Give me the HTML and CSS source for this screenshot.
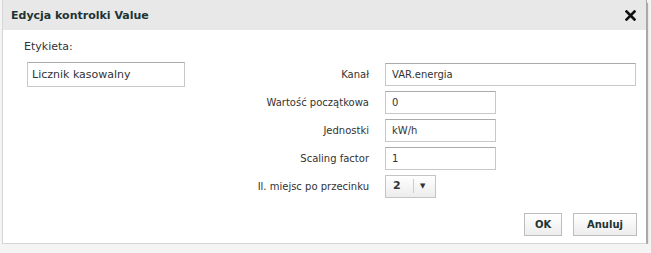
FILE: index.html
```html
<!DOCTYPE html>
<html lang="pl">
<head>
    <meta charset="UTF-8">
    <title>Edycja kontrolki Value</title>
    <link rel="stylesheet" href="styles.css">
</head>
<body>
<div class="dialog">
    <div class="dialog-header">
        <span class="dialog-title">Edycja kontrolki Value</span>
        <svg class="dialog-close" width="11" height="11" viewBox="0 0 11 11">
            <path d="M1.5 1.5 L9.5 9.5 M9.5 1.5 L1.5 9.5" stroke="#111" stroke-width="2.6" stroke-linecap="square"/>
        </svg>
    </div>
    <div class="dialog-body">
        <div class="form">
            <div class="caption">Etykieta:</div>
            <input class="field field-label" type="text" value="Licznik kasowalny">
            <label class="row-label row-1">Kanał</label>
            <input class="field field-wide row-1" type="text" value="VAR.energia">
            <label class="row-label row-2">Wartość początkowa</label>
            <input class="field field-short row-2" type="text" value="0">
            <label class="row-label row-3">Jednostki</label>
            <input class="field field-short row-3" type="text" value="kW/h">
            <label class="row-label row-4">Scaling factor</label>
            <input class="field field-short row-4" type="text" value="1">
            <label class="row-label row-5">Il. miejsc po przecinku</label>
            <div class="select row-5">
                <span class="select-value">2</span>
                <span class="select-arrow">&#x25BC;</span>
            </div>
        </div>
        <div class="buttons">
            <button class="btn btn-ok">OK</button>
            <button class="btn btn-cancel">Anuluj</button>
        </div>
    </div>
</div>
</body>
</html>
```

FILE: styles.css
```css
html, body {
    margin: 0;
    background: #f4f4f4;
    font-family: "DejaVu Sans", Verdana, sans-serif;
    font-size: 10px;
    color: #333;
}

.dialog {
    width: 643px;
    height: 243px;
    margin-left: 2px;
    background: #fff;
    border: 1px solid #d6d6d6;
    border-top: 0;
    border-right-color: #a8a8a8;
    box-shadow: 1px 3px 1px #aaa;
    display: flex;
    flex-direction: column;
}

.dialog-header {
    height: 30px;
    background: #e8e8e8;
    display: flex;
    align-items: center;
    justify-content: space-between;
    padding: 0 10px 0 8px;
}

.dialog-title {
    font-weight: bold;
    font-size: 11px;
    color: #213333;
}

.dialog-body {
    flex: 1;
    padding: 6px 8px 0 19px;
}

.form {
    display: grid;
    grid-template-columns: 163px 200px 251px;
    grid-template-rows: 21px 22px 22px 22px 22px 22px;
    row-gap: 6px;
    align-items: center;
}

.caption {
    grid-column: 1;
    grid-row: 1;
    padding-left: 2px;
    font-size: 11px;
}

.row-label {
    grid-column: 2;
    text-align: right;
    padding-right: 16px;
}

.row-1 { grid-row: 2; }
.row-2 { grid-row: 3; }
.row-3 { grid-row: 4; }
.row-4 { grid-row: 5; }
.row-5 { grid-row: 6; }

.field {
    box-sizing: border-box;
    height: 23px;
    border: 1px solid #c8c8c8;
    border-top-color: #aaa;
    padding: 0 6px;
    font-family: inherit;
    font-size: 10px;
    color: #333;
    grid-column: 3;
}

.field-label {
    grid-column: 1;
    grid-row: 2;
    width: 158px;
    margin-left: 5px;
    height: 25px;
    font-size: 11px;
    padding: 0 4px;
}

.field-wide {
    width: 251px;
}

.field-short {
    width: 111px;
}

.select {
    grid-column: 3;
    box-sizing: border-box;
    width: 51px;
    height: 23px;
    border: 1px solid #c4c4c4;
    background: linear-gradient(#fff, #ececec);
    display: flex;
    align-items: center;
}

.select-value {
    width: 28px;
    padding-left: 7px;
    box-sizing: border-box;
    font-weight: bold;
    font-size: 11px;
    border-right: 1px solid #ccc;
    line-height: 14px;
}

.select-arrow {
    font-size: 7px;
    padding-left: 6px;
    color: #333;
}

.buttons {
    display: flex;
    justify-content: flex-end;
    gap: 11px;
    margin-top: 16px;
    padding-right: 1px;
}

.btn {
    height: 23px;
    border: 1px solid #bdbdbd;
    background: linear-gradient(#fff, #ededed);
    font-family: inherit;
    font-size: 10px;
    font-weight: bold;
    color: #213333;
}

.btn-ok {
    width: 38px;
    padding: 0;
}

.btn-cancel {
    width: 64px;
    padding: 0;
}
```
